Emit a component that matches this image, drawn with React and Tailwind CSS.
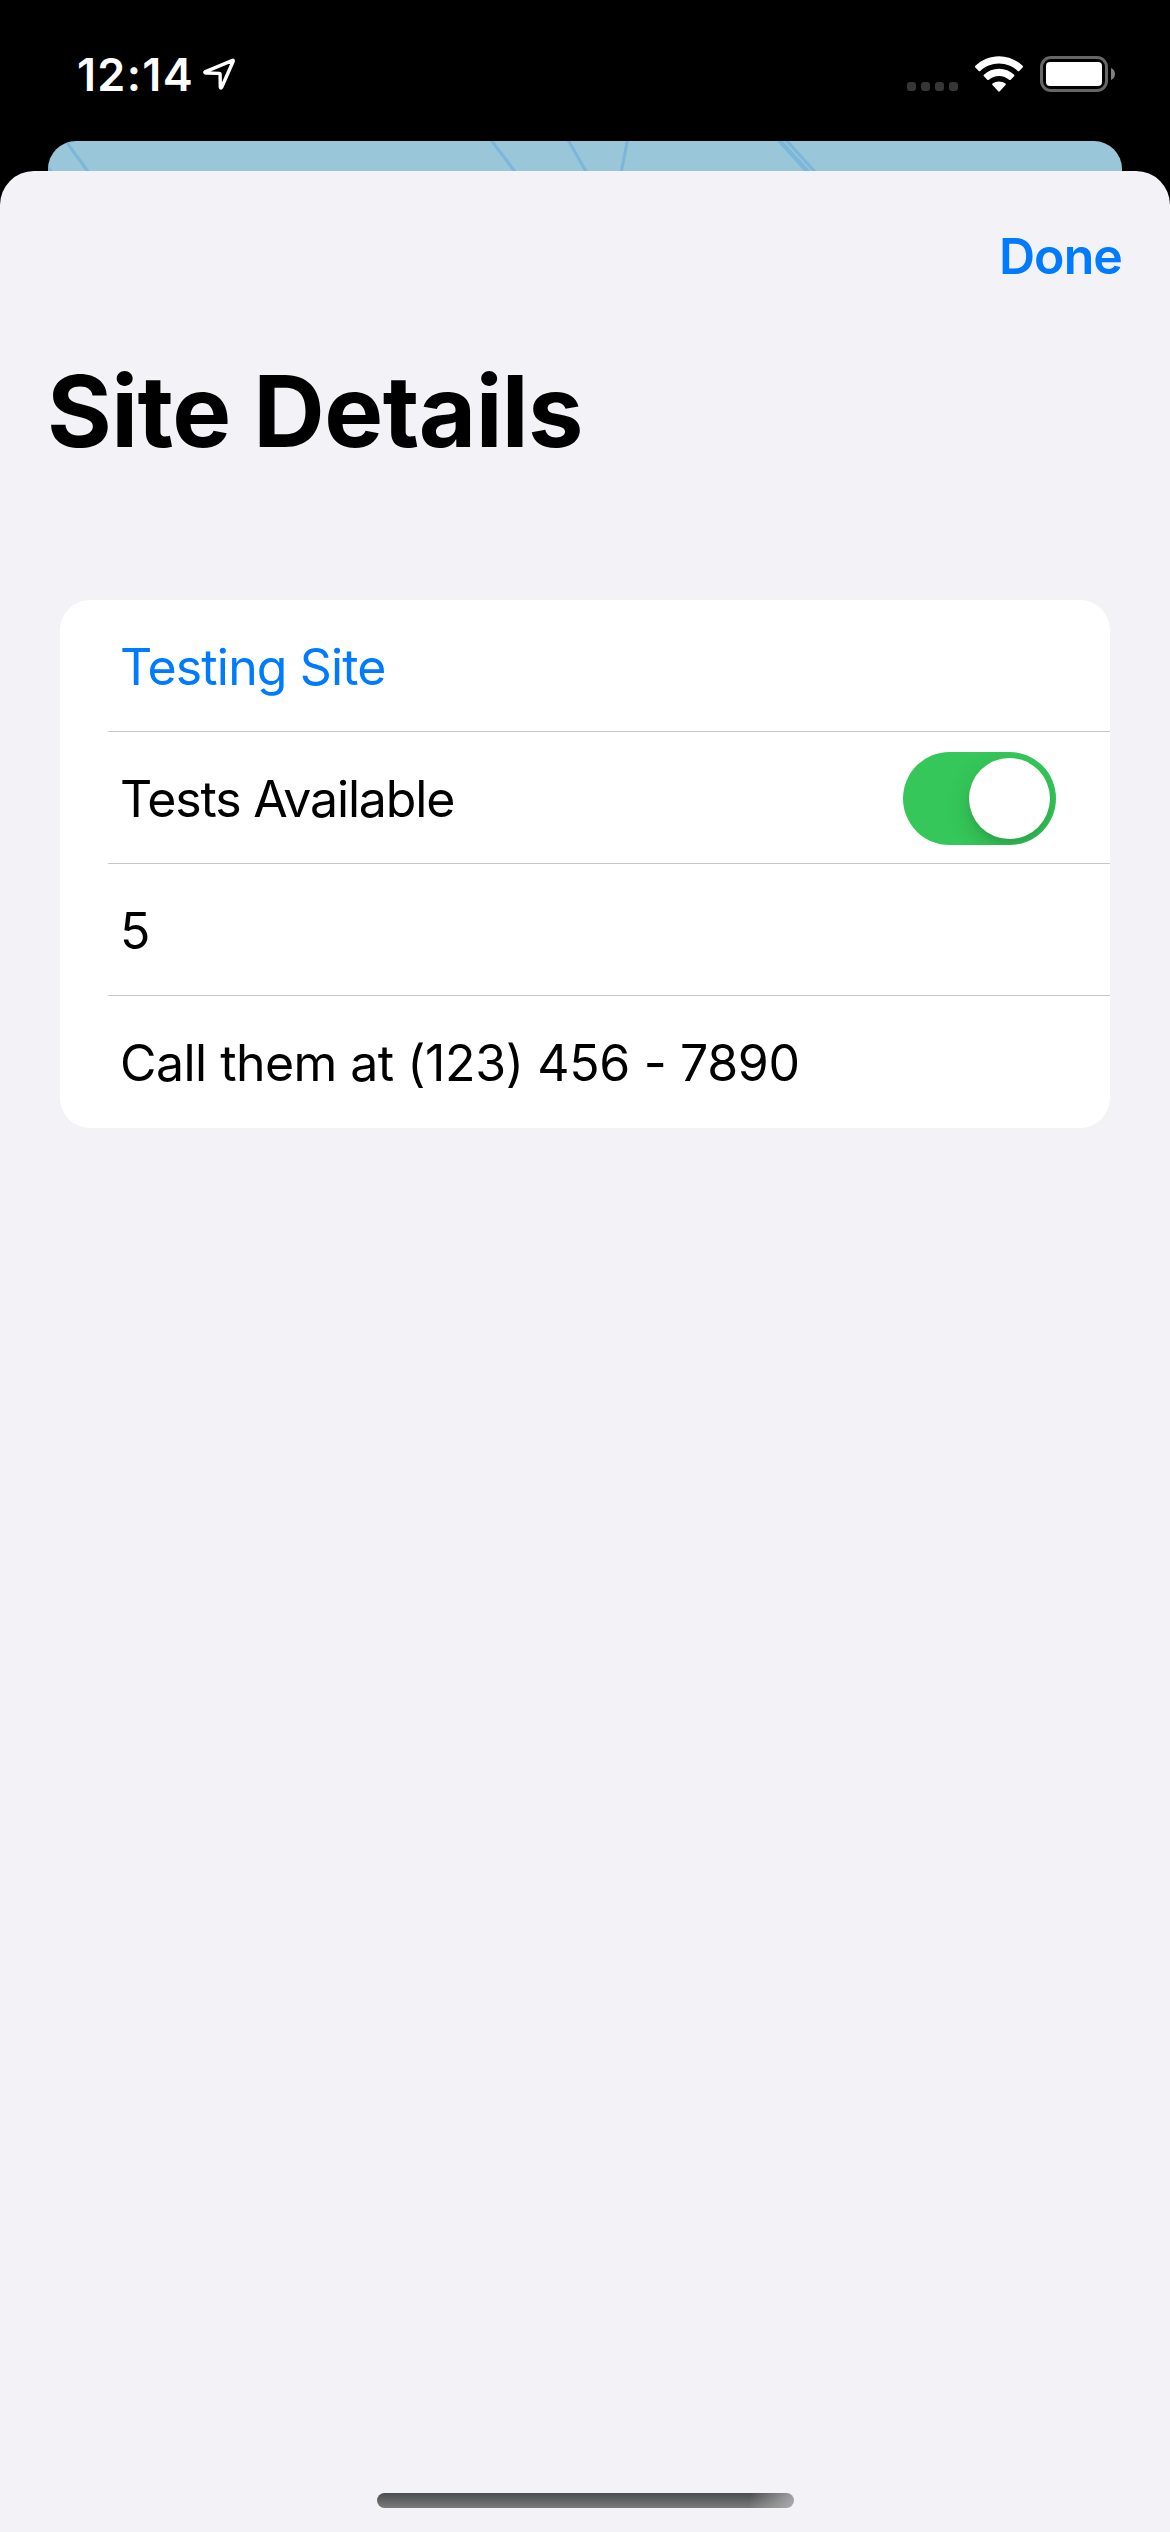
import React from "react";

function LocationArrow() {
  return (
    <svg className="ml-[8px] h-[34px] w-[34px]" viewBox="0 0 34 34" fill="none">
      <path
        d="M30.6 3.4 L3.6 14.6 Q1.8 15.6 4 16 L17 16.4 Q18.1 16.5 18.1 17.6 L18.3 30 Q18.8 32 19.8 30 L31.2 4.2 Q31.5 3 30.6 3.4 Z"
        stroke="white"
        strokeWidth="3.4"
        strokeLinejoin="round"
      />
    </svg>
  );
}

function SignalDots() {
  return (
    <div className="flex gap-[5px] pt-[25px]">
      {[0, 1, 2, 3].map((i) => (
        <div key={i} className="size-[9px] rounded-[3px] bg-[#363636]" />
      ))}
    </div>
  );
}

function Wifi() {
  return (
    <svg className="ml-[16px] h-[38px] w-[50px]" viewBox="0 0 50 38" fill="white">
      <path d="M25 1.2 C15.9 1.2 7.6 4.9 1.4 10.8 Q0.6 11.7 1.4 12.5 L4.7 15.9 Q5.5 16.6 6.3 15.9 C11.2 11.3 17.8 8.5 25 8.5 C32.2 8.5 38.8 11.3 43.7 15.9 Q44.5 16.6 45.3 15.9 L48.6 12.5 Q49.4 11.7 48.6 10.8 C42.4 4.9 34.1 1.2 25 1.2 Z" />
      <path d="M25 13.8 C19.2 13.8 13.9 16 9.9 19.7 Q9.1 20.5 9.9 21.3 L13.3 24.7 Q14.1 25.4 14.9 24.7 C17.6 22.4 21.1 21 25 21 C28.9 21 32.4 22.4 35.1 24.7 Q35.9 25.4 36.7 24.7 L40.1 21.3 Q40.9 20.5 40.1 19.7 C36.1 16 30.8 13.8 25 13.8 Z" />
      <path d="M25 26.4 C22.7 26.4 20.4 27.2 18.5 28.6 Q17.7 29.3 18.5 30.1 L24.2 36.3 Q25 37.1 25.8 36.3 L31.5 30.1 Q32.3 29.3 31.5 28.6 C29.6 27.2 27.3 26.4 25 26.4 Z" />
    </svg>
  );
}

function Battery() {
  return (
    <div className="ml-[16px] flex items-center gap-[3px]">
      <div className="h-[36px] w-[68px] rounded-[11px] border-[3px] border-[#666] p-[3px]">
        <div className="h-full w-full rounded-[4px] bg-white" />
      </div>
      <svg className="h-[12px] w-[4px]" viewBox="0 0 4 12" fill="#808080">
        <path d="M0 0 C2.4 1 4 3.2 4 6 C4 8.8 2.4 11 0 12 Z" />
      </svg>
    </div>
  );
}

function StatusBar() {
  return (
    <div className="flex h-[141px] items-start justify-between pr-[55px] pl-[77px] text-white">
      <div className="mt-[56px] flex h-[36px] items-center">
        <span className="w-[117px] text-[45px] leading-none font-semibold tracking-[1.3px] whitespace-nowrap">12:14</span>
        <LocationArrow />
      </div>
      <div className="mt-[55px] flex h-[38px] items-center">
        <SignalDots />
        <Wifi />
        <Battery />
      </div>
    </div>
  );
}

function MapStrip() {
  return (
    <div className="mx-[48px] h-[60px] overflow-hidden rounded-t-[28px] bg-[#99c6d9]">
      <svg className="h-[60px] w-[1074px]" viewBox="0 0 1074 60" fill="none" stroke="#7cb6da" strokeWidth="3">
        <path d="M17 -1 L41 32" />
        <path d="M-1 26 L6 33" />
        <path d="M443 -1 L468 32" />
        <path d="M520 -1 L539 32" />
        <path d="M579.5 -1 L573 32" />
        <path d="M731 -1 L761 32" strokeWidth="4.4" />
        <path d="M738 -1 L768 32" />
      </svg>
    </div>
  );
}

function Toggle() {
  return (
    <div className="flex h-[93px] w-[153px] items-center justify-end overflow-hidden rounded-full bg-[#35c759] p-[6px]">
      <div className="size-[81px] rounded-full bg-white shadow-[0_9px_24px_rgba(0,0,0,0.15),0_6px_4px_rgba(0,0,0,0.05)]" />
    </div>
  );
}

function Row({ children, last }) {
  return (
    <div
      className={
        last
          ? "ml-[48px] flex h-[132px] items-center justify-between pt-[2px] pr-[54px] pl-[12px]"
          : "ml-[48px] flex h-[132px] items-center justify-between border-b border-[#c6c6c8] pt-[2px] pr-[54px] pl-[12px]"
      }
    >
      {children}
    </div>
  );
}

export default function App() {
  return (
    <div className="flex h-[2532px] w-[1170px] flex-col overflow-hidden bg-black font-['Inter',sans-serif] text-[50px] leading-[60px] text-black">
      <StatusBar />
      <MapStrip />
      <main className="-mt-[30px] flex flex-1 flex-col rounded-t-[34px] bg-[#f2f2f7]">
        <div className="flex justify-end pt-[55px] pr-[48px]">
          <button className="font-semibold tracking-[-0.9px] text-[#007aff]">Done</button>
        </div>
        <h1 className="mt-[65px] pl-[47px] text-[99px] leading-[120px] font-bold tracking-[-0.6px]">
          Site Details
        </h1>
        <section className="mx-[60px] mt-[129px] rounded-[30px] bg-white">
          <Row>
            <span className="tracking-[-0.85px] text-[#007aff]">Testing Site</span>
          </Row>
          <Row>
            <span className="tracking-[-1.15px]">Tests Available</span>
            <Toggle />
          </Row>
          <Row>
            <span>5</span>
          </Row>
          <Row last>
            <span className="tracking-[-0.55px]">
              Call them at <span className="tracking-[-0.35px]">(123) 456 - 7890</span>
            </span>
          </Row>
        </section>
        <div className="mx-auto mt-auto mb-[24px] h-[15px] w-[417px] rounded-full bg-[linear-gradient(100deg,transparent_89%,rgba(190,190,192,0.75)_100%),linear-gradient(#4b4e4e,#7a7a7a)]" />
      </main>
    </div>
  );
}
